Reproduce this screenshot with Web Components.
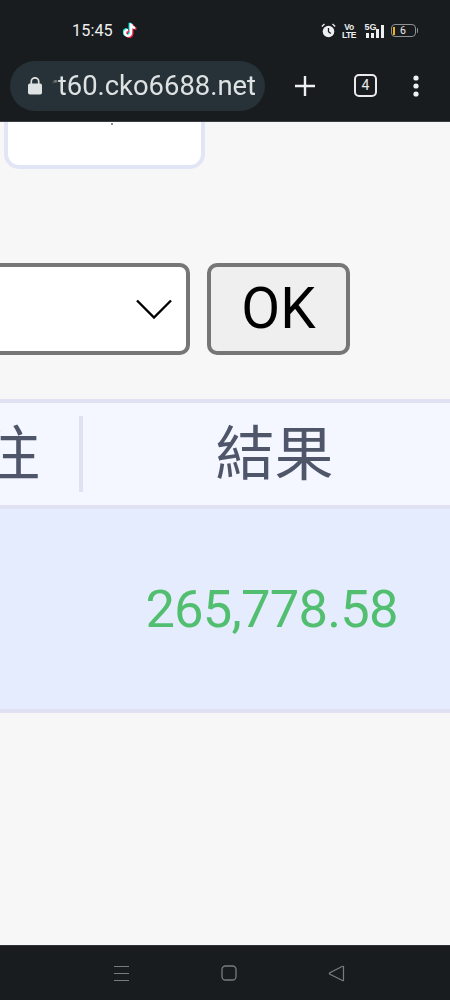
<!DOCTYPE html>
<html lang="zh-Hant"><head><meta charset="utf-8"><title>結果</title>
<style>
html,body{margin:0;padding:0;height:1000px;overflow:hidden;background:#f7f7f7;font-family:Roboto,"Noto Sans CJK TC",sans-serif}
body{display:flex;flex-direction:column;width:450px}
</style></head><body>
<status-bar></status-bar>
<browser-toolbar url="rt60.cko6688.net" tabs="4"></browser-toolbar>
<page-content>
  <info-card></info-card>
  <filter-row></filter-row>
  <result-table></result-table>
</page-content>
<nav-bar></nav-bar>
<script>
function def(name,html){customElements.define(name,class extends HTMLElement{constructor(){super();this.attachShadow({mode:'open'}).innerHTML=typeof html==='function'?html(this):html}})}
def('status-bar',`<style>
:host{display:flex;align-items:center;height:61px;flex:none;background:#191c1f;color:#eceeef;box-sizing:border-box;padding:0 32px 0 72px}
.t{font:400 16.200px/20px Roboto,sans-serif;letter-spacing:.1px}
.tk{margin-left:10px;display:block}
.r{margin-left:auto;display:flex;align-items:center}
.lte{display:flex;flex-direction:column;font:700 8.500px/8px "Liberation Sans Narrow","Liberation Sans",sans-serif;align-items:center;margin-left:8px;width:10px;letter-spacing:-.4px}
.five{display:flex;flex-direction:column;margin-left:10.500px;position:relative;width:20px;height:14px}
.five b{font:700 9px/8px "Liberation Sans Narrow","Liberation Sans",sans-serif;position:absolute;left:0;top:-1px}
.bat{margin-left:6px;box-sizing:border-box;width:25px;height:13px;border:1.300px solid #8e9193;border-radius:4px;display:flex;align-items:center;justify-content:center;font:400 10.500px/10px Roboto,sans-serif;position:relative}
.bat i{position:absolute;left:1.500px;top:1.500px;bottom:1.500px;width:2px;background:#f2b01e}
.cap{width:1.500px;height:5px;background:#8e9193;margin-left:1px;border-radius:0 1px 1px 0}
</style>
<span class="t">15:45</span>
<svg class="tk" width="16" height="17" viewBox="0 0 16 17" fill="none" stroke-width="2.400"><path d="M8 1.500v9.400a3 3 0 1 1-3-3M8 2c.4 2.300 2 3.700 4.200 3.900" stroke="#25f4ee" transform="translate(-1.200 -.7)"/><path d="M8 1.500v9.400a3 3 0 1 1-3-3M8 2c.4 2.300 2 3.700 4.200 3.900" stroke="#fe2c55" transform="translate(1.200 .8)"/><path d="M8 1.500v9.400a3 3 0 1 1-3-3M8 2c.4 2.300 2 3.700 4.200 3.900" stroke="#fff"/></svg>
<div class="r">
<svg width="15" height="15" viewBox="0 0 15 15"><circle cx="7.500" cy="8.500" r="5.800" fill="#eceeef"/><path d="M7.500 5v3.700l2.300 1.800" stroke="#191c1f" stroke-width="1.300" fill="none"/><path d="M.8 3.500 3.500 1M14.200 3.500 11.500 1" stroke="#eceeef" stroke-width="1.300"/></svg>
<span class="lte"><span>Vo</span><span>LTE</span></span>
<span class="five"><b>5G</b><svg width="20" height="14" viewBox="0 0 20 14" fill="#eceeef"><rect x="1" y="9" width="3" height="5"/><rect x="6" y="9" width="3" height="5"/><rect x="11" y="5" width="3" height="9"/><rect x="16" y="1" width="3" height="13"/></svg></span>
<span class="bat"><i></i>6</span><span class="cap"></span>
</div>`);
def('browser-toolbar',el=>`<style>
:host{display:flex;align-items:center;flex:none;height:61px;box-sizing:border-box;padding:0 0 11px 10px;background:#191c1f;border-bottom:1px solid #3a3d40}
.pill{width:255px;height:50px;border-radius:25px;background:#263237;display:flex;align-items:center;box-sizing:border-box;padding-left:18px;flex:none;overflow:hidden}
.u{margin-left:10px;width:204px;overflow:hidden;direction:rtl;white-space:nowrap;font:400 27.400px/52px Roboto,sans-serif;color:#dfe2e3;-webkit-mask-image:linear-gradient(90deg,transparent,#000 8px);mask-image:linear-gradient(90deg,transparent,#000 8px)}
.u span{unicode-bidi:plaintext}
.plus{margin-left:30px}
.tabs{margin-left:39px;box-sizing:border-box;width:23px;height:23px;border:2.500px solid #e8eaeb;border-radius:5px;color:#e8eaeb;font:400 14px/18px Roboto,sans-serif;text-align:center}
.dots{margin-left:36px}
</style>
<div class="pill"><svg width="14" height="18" viewBox="0 0 14 18"><rect y="6.500" width="14" height="11" rx="1.800" fill="#dfe2e3"/><path d="M3.300 7V4.500a3.700 3.700 0 0 1 7.400 0V7" fill="none" stroke="#dfe2e3" stroke-width="1.700"/></svg>
<div class="u"><span>${el.getAttribute('url')}</span></div></div>
<svg class="plus" width="20" height="20" viewBox="0 0 20 20"><path d="M10 0v20M0 10h20" stroke="#eef0f1" stroke-width="2.400"/></svg>
<div class="tabs">${el.getAttribute('tabs')}</div>
<svg class="dots" width="6" height="22" viewBox="0 0 6 22" fill="#eef0f1"><circle cx="3" cy="3" r="2.600"/><circle cx="3" cy="11" r="2.600"/><circle cx="3" cy="19" r="2.600"/></svg>`);
def('page-content',`<style>:host{display:flex;flex-direction:column;flex:1;min-height:0;overflow:hidden;background:#f7f7f7}</style><slot></slot>`);
def('info-card',`<style>
:host{display:block;flex:none;box-sizing:border-box;width:201px;height:67px;margin:-20px 0 0 4px;background:#fff;border:4px solid #e1e5f6;border-radius:15px;position:relative}
i{position:absolute;left:103px;top:17px;width:2px;height:2px;background:#8a8d96}
</style><i></i>`);
def('filter-row',`<style>
:host{display:flex;flex:none;margin:94px 0 0 -100px;gap:17px;height:92px;align-items:stretch}
.sel,.btn{box-sizing:border-box;border:4px solid #767676;border-radius:10px}
.sel{width:290px;background:#fff;display:flex;align-items:center;justify-content:flex-end;padding-right:14px}
.btn{width:143px;background:#efefef;color:#000;font:400 56.500px/84px Roboto,sans-serif;text-align:center}
</style><div class="sel"><svg width="36" height="20" viewBox="0 0 36 20"><path d="M1 1.500 18 18.500 35 1.500" fill="none" stroke="#000" stroke-width="2.400"/></svg></div><div class="btn">OK</div>`);
def('result-table',`<style>
:host{display:block;flex:none;margin-top:44px;color:#50566a}
.h{display:flex;height:110px;box-sizing:border-box;background:#f4f7ff;border-top:4px solid #e0e2f3;border-bottom:4px solid #e0e2f3;align-items:center;font:400 59px/1 "Noto Sans CJK TC",sans-serif;overflow:hidden}
.a{width:79px;flex:none;display:flex;justify-content:flex-end;padding:0 39px 9px 0;box-sizing:border-box;white-space:nowrap}
.d{width:4px;height:76px;background:#e0e2f3;flex:none}
.b{width:383px;flex:none;text-align:center;padding-bottom:9px}
.row{display:flex;height:204px;box-sizing:border-box;background:#e5ecfd;border-bottom:4px solid #e0e2f3;align-items:center;overflow:hidden}
.n{margin-left:83px;width:377px;flex:none;text-align:center;color:#52bf70;font:400 52.500px/1 Roboto,sans-serif;letter-spacing:-.8px}
</style><div class="h"><div class="a">投注</div><div class="d"></div><div class="b">結果</div></div><div class="row"><div class="n">265,778.58</div></div>`);
def('nav-bar',`<style>
:host{display:flex;flex:none;height:55px;background:#191c1f;border-top:1px solid #2e3134;box-sizing:border-box;align-items:center;padding:0 0 0 113px}
svg{display:block}
</style>
<svg width="17" height="17" viewBox="0 0 17 17"><path d="M1 1.500h15M1 8.500h15M1 15.500h15" stroke="#787c81" stroke-width="1.200"/></svg>
<svg style="margin-left:91px" width="16" height="16" viewBox="0 0 16 16"><rect x="1" y="1" width="14" height="14" rx="3.500" fill="none" stroke="#787c81" stroke-width="1.300"/></svg>
<svg style="margin-left:91px" width="17" height="17" viewBox="0 0 17 17"><path d="M15.500 1.500v14a1 1 0 0 1-1 0L1.500 9a1 1 0 0 1 0-1L14.500 1.300a1 1 0 0 1 1 .2z" fill="none" stroke="#787c81" stroke-width="1.200"/></svg>`);
</script>
</body></html>
